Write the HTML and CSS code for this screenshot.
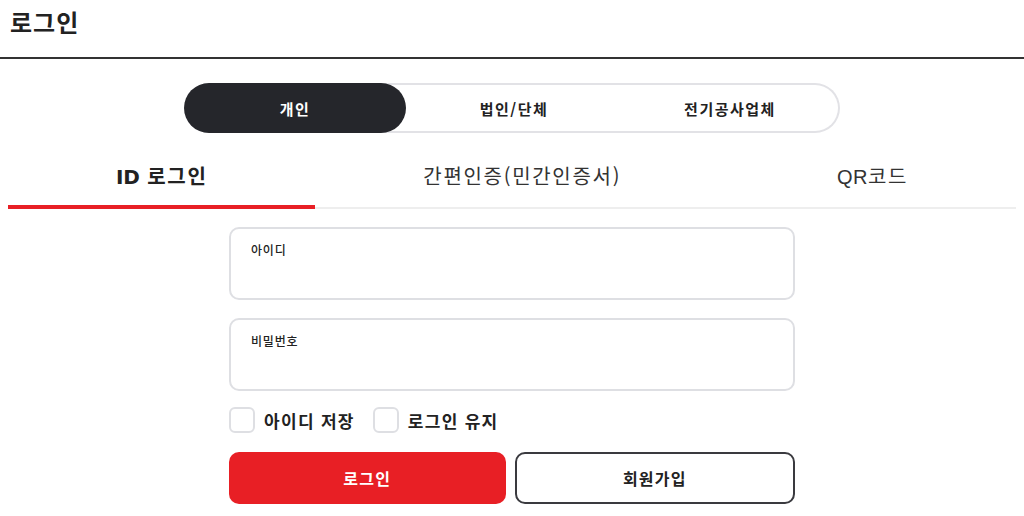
FILE: index.html
```html
<!DOCTYPE html>
<html lang="ko">
<head>
<meta charset="utf-8">
<title>로그인</title>
<link rel="stylesheet" href="styles.css">
</head>
<body>
<header class="page-header">
  <h1 class="page-title">로그인</h1>
</header>
<main class="content">
  <nav class="segment">
    <button class="seg-item active">개인</button>
    <button class="seg-item">법인/단체</button>
    <button class="seg-item">전기공사업체</button>
  </nav>
  <div class="tabs">
    <button class="tab active"><span class="latin-bold">ID</span> 로그인</button>
    <button class="tab">간편인증(민간인증서)</button>
    <button class="tab"><span class="latin">QR</span>코드</button>
  </div>
  <form class="form">
    <label class="field">
      <span class="field-label">아이디</span>
      <input class="field-input" type="text">
    </label>
    <label class="field">
      <span class="field-label">비밀번호</span>
      <input class="field-input" type="password">
    </label>
    <div class="checks">
      <label class="check"><span class="box"></span>아이디 저장</label>
      <label class="check"><span class="box"></span>로그인 유지</label>
    </div>
    <div class="actions">
      <button type="button" class="btn btn-primary">로그인</button>
      <button type="button" class="btn btn-outline">회원가입</button>
    </div>
  </form>
</main>
</body>
</html>
```

FILE: styles.css
```css
* { box-sizing: border-box; }
html, body { margin: 0; padding: 0; background: #fff; }
body {
  font-family: "Noto Sans CJK KR", "Liberation Sans", sans-serif;
  color: #222;
}
button { font-family: inherit; }

.page-header {
  height: 59px;
  border-bottom: 2px solid #333;
  padding: 2px 10px 0;
}
.page-title {
  margin: 0;
  font-size: 24px;
  font-weight: 700;
  line-height: 40px;
  letter-spacing: 1px;
  color: #222;
}

.content { padding: 24px 8px 0; }

.segment {
  width: 656px;
  height: 50px;
  margin: 0 auto;
  display: grid;
  grid-template-columns: 222px 1fr 1fr;
  border: 2px solid #e2e2e6;
  border-left: none;
  border-radius: 25px;
}
.seg-item {
  border: none;
  background: transparent;
  font-size: 15px;
  font-weight: 700;
  letter-spacing: 1.5px;
  color: #222;
  padding: 0;
  cursor: pointer;
}
.seg-item.active {
  background: #25262b;
  color: #fff;
  border-radius: 25px;
  margin: -2px 0;
}

.tabs {
  display: flex;
  margin-top: 18px;
  border-bottom: 2px solid #eee;
}
.tab {
  flex: 1 1 auto;
  height: 58px;
  border: none;
  background: transparent;
  font-size: 20px;
  font-weight: 400;
  letter-spacing: 1.7px;
  color: #333;
  padding: 0 0 6px;
  margin-bottom: -2px;
  border-bottom: 4px solid transparent;
  cursor: pointer;
}
.tab .latin { font-family: "Liberation Sans", sans-serif; letter-spacing: 0.5px; }
.tab .latin-bold { font-family: "DejaVu Sans", sans-serif; letter-spacing: 0; }
.tab.active {
  font-weight: 700;
  color: #222;
  border-bottom-color: #e81f25;
}

.form {
  width: 566px;
  margin: 18px auto 0;
  display: flex;
  flex-direction: column;
}
.field {
  display: flex;
  flex-direction: column;
  height: 73px;
  border: 2px solid #dedfe3;
  border-radius: 10px;
  padding: 12px 20px 0;
  margin-bottom: 18px;
}
.field-label {
  font-size: 12px;
  font-weight: 500;
  letter-spacing: 0.8px;
  color: #222;
  line-height: 18px;
}
.field-input {
  border: none;
  outline: none;
  font-size: 15px;
  padding: 4px 0;
  background: transparent;
}

.checks {
  display: flex;
  gap: 18px;
  height: 28px;
  align-items: center;
  margin-top: -3px;
}
.check {
  display: flex;
  align-items: center;
  gap: 9px;
  font-size: 17px;
  font-weight: 700;
  letter-spacing: 1.3px;
  color: #222;
}
.box {
  width: 26px;
  height: 26px;
  border: 2px solid #dedfe3;
  border-radius: 6px;
}

.actions {
  display: flex;
  gap: 9px;
  margin-top: 18px;
}
.btn {
  flex: 1;
  height: 52px;
  border-radius: 10px;
  font-size: 16px;
  font-weight: 700;
  letter-spacing: 1.2px;
  cursor: pointer;
}
.btn-primary {
  background: #e81f25;
  color: #fff;
  border: none;
}
.btn-outline {
  background: #fff;
  color: #222;
  border: 2px solid #3a3a3f;
}
```
